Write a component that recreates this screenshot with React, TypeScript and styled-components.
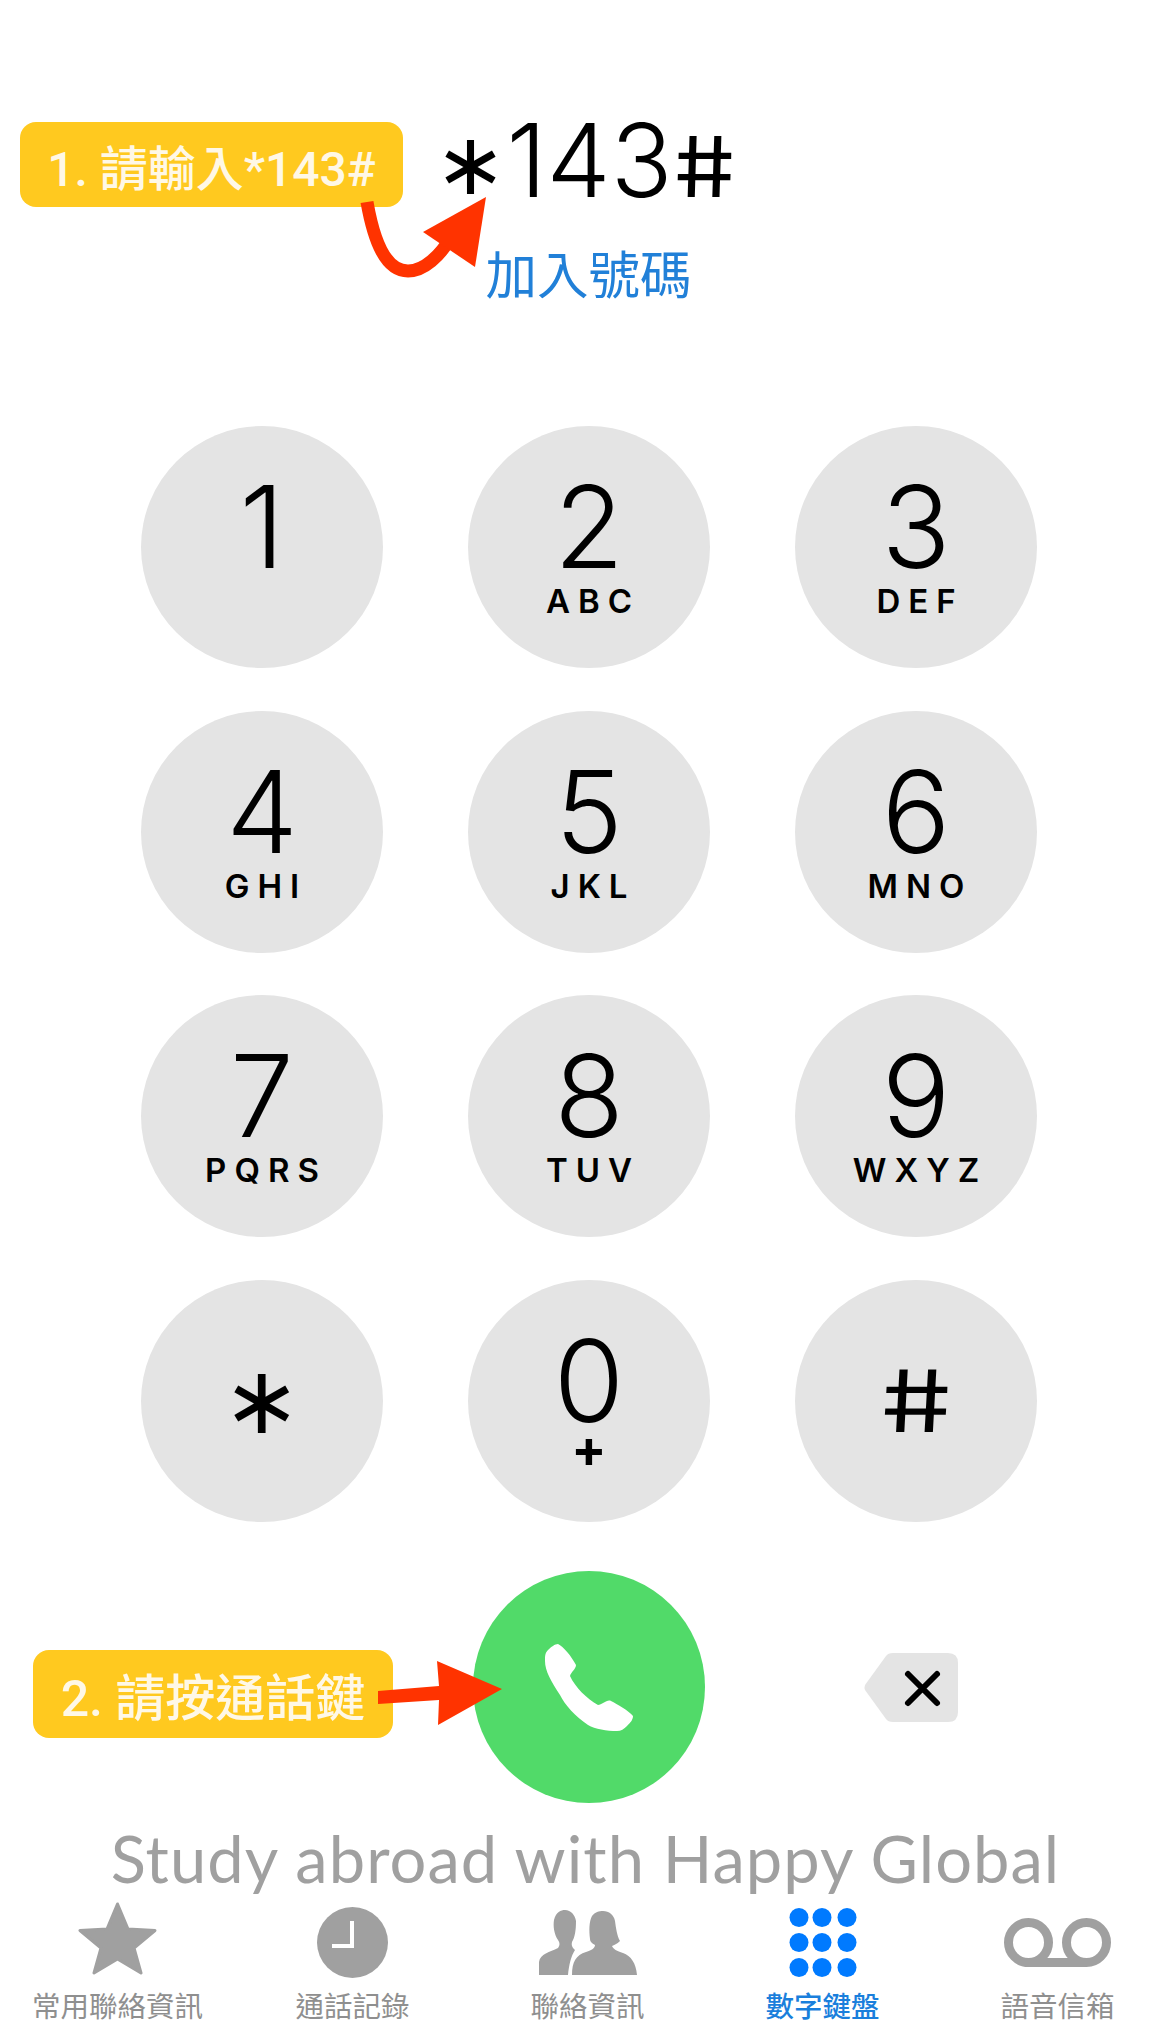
import styled, { createGlobalStyle } from "styled-components"

const GlobalStyle = createGlobalStyle`
  html, body {
    margin: 0;
    padding: 0;
    background: #fff;
  }
`

const SANS = `"Inter", "Liberation Sans", "Noto Sans CJK TC", sans-serif`
const CJK = `"Liberation Sans", "Noto Sans CJK TC", sans-serif`

const Page = styled.div`
  position: relative;
  width: 1171px;
  height: 2027px;
  overflow: hidden;
  background: #fff;
  color: #000;
  font-family: ${SANS};
`

const NumberArea = styled.div`
  height: 426px;
  padding: 104px 0 0 0;
  box-sizing: border-box;
  display: flex;
  flex-direction: column;
  align-items: center;
`

const Dialed = styled.div`
  font-size: 102px;
  font-weight: 300;
  line-height: 112px;
  white-space: nowrap;
  margin-left: -5px;
`

const Star = styled.span`
  font-family: "DejaVu Sans", sans-serif;
  font-weight: 400;
  font-size: 86px;
  line-height: 0;
  vertical-align: 3px;
`

const Hash = styled.span`
  display: inline-block;
  transform: skewX(9deg) scaleX(1.15);
  font-weight: 400;
  font-size: 84px;
  line-height: 0;
  margin-left: 6px;
`

const AddNumber = styled.div`
  font-family: ${CJK};
  font-size: 51.5px;
  line-height: 60px;
  color: #2180d8;
  margin-top: 30px;
  margin-left: 6px;
`

const Callout = styled.div<{ $top: number; $left: number; $width: number; $height: number; $size: number }>`
  position: absolute;
  top: ${(p) => p.$top}px;
  left: ${(p) => p.$left}px;
  width: ${(p) => p.$width}px;
  height: ${(p) => p.$height}px;
  border-radius: 16px;
  background: #ffc91f;
  color: #fff8e6;
  font-family: "Roboto", "Noto Sans CJK TC", sans-serif;
  font-size: ${(p) => p.$size}px;
  font-weight: 500;
  display: flex;
  align-items: center;
  justify-content: center;
  white-space: nowrap;
`

const Overlay = styled.svg<{ $top: number; $left: number }>`
  position: absolute;
  top: ${(p) => p.$top}px;
  left: ${(p) => p.$left}px;
`

const Keypad = styled.div`
  display: grid;
  grid-template-columns: repeat(3, 242px);
  grid-auto-rows: 242px;
  column-gap: 85px;
  row-gap: 42.6px;
  padding-left: 141px;
`

const Key = styled.div`
  border-radius: 50%;
  background: #e4e4e4;
  display: flex;
  flex-direction: column;
  align-items: center;
  padding-top: 51px;
  box-sizing: border-box;
`

const SymbolKey = styled(Key)`
  padding-top: 0;
  justify-content: center;
`

const Digit = styled.div`
  font-size: 114px;
  font-weight: 300;
  line-height: 100px;
`

const Letters = styled.div`
  font-size: 33px;
  font-weight: 600;
  line-height: 36px;
  letter-spacing: 8px;
  margin-right: -8px;
  margin-top: 6px;
`

const Plus = styled.div`
  font-size: 52px;
  font-weight: 700;
  line-height: 36px;
`

const StarKey = styled.div`
  font-family: "DejaVu Sans", sans-serif;
  font-size: 94px;
  line-height: 100px;
`

const HashKey = styled.div`
  font-size: 86px;
  font-weight: 400;
  line-height: 100px;
  transform: skewX(9deg) scaleX(1.3);
`

const CallRow = styled.div`
  display: grid;
  grid-template-columns: repeat(3, 242px);
  column-gap: 85px;
  padding-left: 141px;
  margin-top: 49px;
  height: 233px;
  align-items: center;
`

const CallButton = styled.div`
  grid-column: 2;
  width: 232px;
  height: 232px;
  justify-self: center;
  border-radius: 50%;
  background: #51da69;
  display: flex;
  align-items: center;
  justify-content: center;
`

const BackspaceBox = styled.div`
  justify-self: start;
  margin-left: 69px;
  display: flex;
`

const Watermark = styled.div`
  margin-top: 16px;
  text-align: center;
  font-family: "Lato", sans-serif;
  font-weight: 400;
  font-size: 65px;
  line-height: 76px;
  letter-spacing: 1.05px;
  color: #a0a0a0;
  white-space: nowrap;
`

const TabBar = styled.div`
  display: grid;
  grid-template-columns: repeat(5, 235px);
  margin-top: -1px;
`

const Tab = styled.div`
  display: flex;
  flex-direction: column;
  align-items: center;
`

const TabIcon = styled.div`
  height: 95px;
  display: flex;
  align-items: center;
  justify-content: center;
`

const TabLabel = styled.div<{ $active?: boolean }>`
  font-family: ${CJK};
  font-size: 28.5px;
  line-height: 34px;
  white-space: nowrap;
  color: ${(p) => (p.$active ? "#1a7fdc" : "#8f8f8f")};
  font-weight: ${(p) => (p.$active ? 500 : 400)};
`

const StarSvg = styled.svg`
  margin-bottom: 8px;
`

const keys = [
  ["1", ""],
  ["2", "ABC"],
  ["3", "DEF"],
  ["4", "GHI"],
  ["5", "JKL"],
  ["6", "MNO"],
  ["7", "PQRS"],
  ["8", "TUV"],
  ["9", "WXYZ"],
]

const StarIcon = () => (
  <StarSvg width="79" height="73" viewBox="0 0 79 73">
    <path
      d="M39.5 2 L50 27 L77 28.500 L56 46 L63 71 L39.5 57 L16 71 L23 46 L2 28.500 L29 27 Z"
      fill="#a0a0a0"
      stroke="#a0a0a0"
      strokeWidth="3"
      strokeLinejoin="round"
    />
  </StarSvg>
)

const ClockIcon = () => (
  <svg width="71" height="71" viewBox="0 0 71 71">
    <circle cx="35.5" cy="35.5" r="35.5" fill="#a0a0a0" />
    <path d="M35 14 V39 H15" fill="none" stroke="#fff" strokeWidth="4" />
  </svg>
)

const ContactsIcon = () => (
  <svg width="98" height="65" viewBox="0 0 98 65">
    <path
      d="M0 65 V52 C1 44 11 42 19 38 C21 35 21 33 19 30 C15 24 14 16 15 10 C17 2 22 0 26 0 C32 0 36 5 37 11 C37 20 36 27 33 32 C32 36 34 38 36 40 C32 46 30 55 29 65 Z"
      fill="#a0a0a0"
    />
    <path
      d="M33 65 C33 52 37 45 47 42 C53 40 56 38 56 35 C52 33 51 31 51 29 C50 20 50 12 53 6 C56 2 60 1 64 1 C70 1 75 5 76 11 C77 18 78 26 81 31 C78 34 75 35 73 36 C74 39 78 41 84 43 C92 46 97 53 98 65 Z"
      fill="#a0a0a0"
    />
  </svg>
)

const KeypadIcon = () => (
  <svg width="68" height="69" viewBox="0 0 68 69">
    {[9.5, 34.5, 59.5].map((y) =>
      [10, 33, 58].map((x) => <circle key={`${x}-${y}`} cx={x} cy={y} r="9.5" fill="#007aff" />)
    )}
  </svg>
)

const VoicemailIcon = () => (
  <svg width="107" height="49" viewBox="0 0 107 49">
    <circle cx="24.5" cy="24.5" r="20" fill="none" stroke="#a0a0a0" strokeWidth="9" />
    <circle cx="82.5" cy="24.5" r="20" fill="none" stroke="#a0a0a0" strokeWidth="9" />
    <path d="M24 44.5 H83" stroke="#a0a0a0" strokeWidth="9" />
  </svg>
)

const PhoneIcon = () => (
  <svg width="88" height="88" viewBox="0 0 88 88">
    <path
      d="M13 1 C18 3 27 14 31 22 C31 26 26 29 25 33 C30 44 42 56 53 62 C57 62 62 56 66 58 C72 61 84 68 88 73 C88 77 85 80 82 83 C79 86 76 88 72 88 C62 88 50 86 43 82 C30 73 20 62 15 52 C6 38 0 28 0 18 C0 13 0 10 3 7 C6 4 10 1 13 1 Z"
      fill="#fff"
    />
  </svg>
)

const BackspaceIcon = () => (
  <svg width="94" height="69" viewBox="0 0 94 69">
    <path
      d="M22 3 Q24 0 29 0 H84 Q94 0 94 10 V59 Q94 69 84 69 H29 Q24 69 22 66 L1 37 Q0 34.500 1 32 Z"
      fill="#e4e4e4"
    />
    <path d="M44 21 L73 50 M73 21 L44 50" stroke="#000" strokeWidth="6" strokeLinecap="round" />
  </svg>
)

const tabs = [
  { label: "常用聯絡資訊", icon: <StarIcon /> },
  { label: "通話記錄", icon: <ClockIcon /> },
  { label: "聯絡資訊", icon: <ContactsIcon /> },
  { label: "數字鍵盤", icon: <KeypadIcon />, active: true },
  { label: "語音信箱", icon: <VoicemailIcon /> },
]

export default function App() {
  return (
    <Page>
      <GlobalStyle />
      <NumberArea>
        <Dialed>
          <Star>∗</Star>143<Hash>#</Hash>
        </Dialed>
        <AddNumber>加入號碼</AddNumber>
      </NumberArea>

      <Keypad>
        {keys.map(([digit, letters]) => (
          <Key key={digit}>
            <Digit>{digit}</Digit>
            {letters && <Letters>{letters}</Letters>}
          </Key>
        ))}
        <SymbolKey>
          <StarKey>∗</StarKey>
        </SymbolKey>
        <Key>
          <Digit>0</Digit>
          <Plus>+</Plus>
        </Key>
        <SymbolKey>
          <HashKey>#</HashKey>
        </SymbolKey>
      </Keypad>

      <CallRow>
        <CallButton>
          <PhoneIcon />
        </CallButton>
        <BackspaceBox>
          <BackspaceIcon />
        </BackspaceBox>
      </CallRow>

      <Watermark>Study abroad with Happy Global</Watermark>

      <TabBar>
        {tabs.map((tab) => (
          <Tab key={tab.label}>
            <TabIcon>{tab.icon}</TabIcon>
            <TabLabel $active={tab.active}>{tab.label}</TabLabel>
          </Tab>
        ))}
      </TabBar>

      <Callout $top={122} $left={20} $width={383} $height={85} $size={48}>
        1. 請輸入*143#
      </Callout>
      <Overlay $top={190} $left={350} width="150" height="95" viewBox="0 0 150 95">
        <path d="M17 12 C24 52 36 81 58 81 C74 81 90 66 102 46" fill="none" stroke="#ff3300" strokeWidth="13" />
        <path d="M136 7 L73 42 L125 77 Z" fill="#ff3300" />
      </Overlay>

      <Callout $top={1650} $left={33} $width={360} $height={88} $size={50}>
        2. 請按通話鍵
      </Callout>
      <Overlay $top={1655} $left={375} width="130" height="75" viewBox="0 0 130 75">
        <path d="M3 36 L64 31 L62 6 L127 34 L63 70 L64 45 L3 49 Z" fill="#ff3300" />
      </Overlay>
    </Page>
  )
}
